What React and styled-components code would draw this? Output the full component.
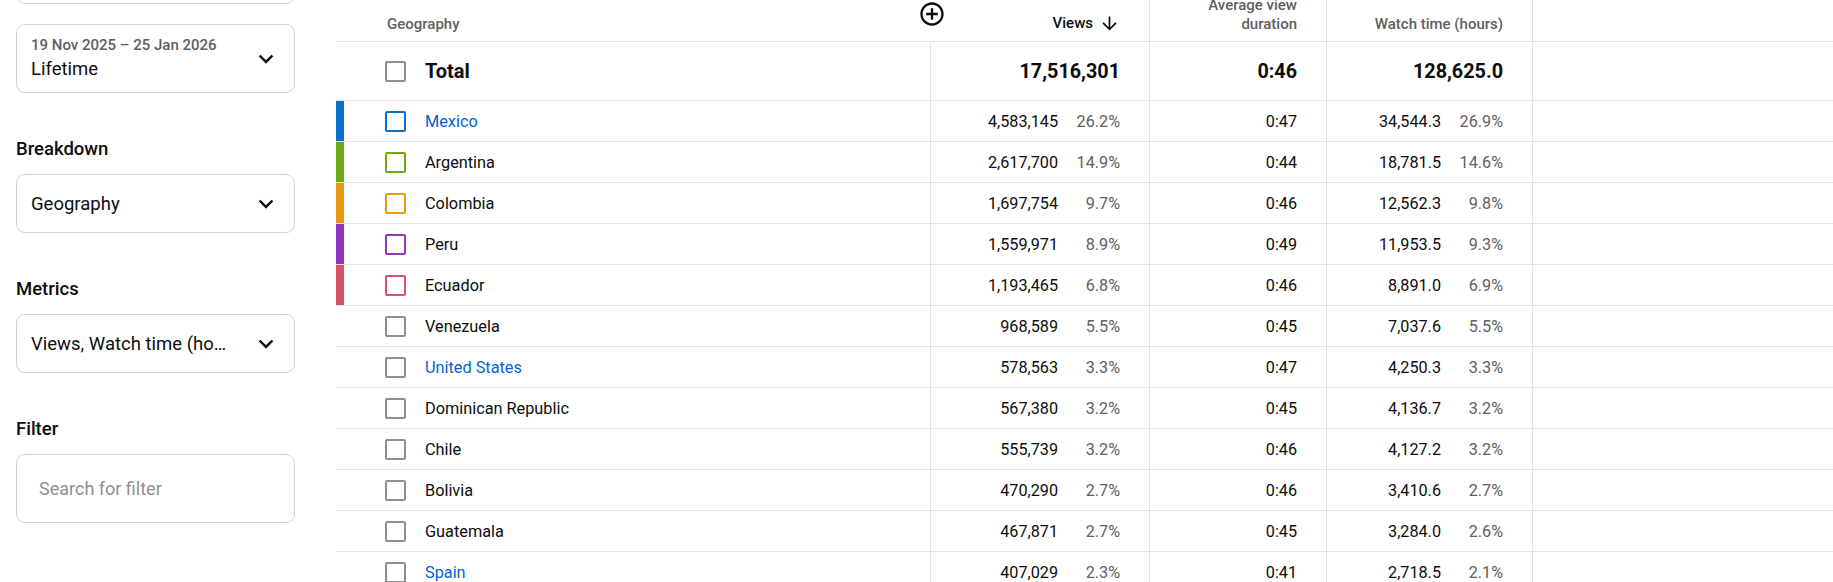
import styled, { createGlobalStyle } from "styled-components";

const GlobalStyle = createGlobalStyle`
  html, body {
    margin: 0;
    padding: 0;
    overflow: hidden;
    background: #ffffff;
  }
  body {
    font-family: Roboto, "Noto Sans", Arial, sans-serif;
    color: #0d0d0d;
  }
`;

const Page = styled.div`
  display: flex;
  align-items: flex-start;
  width: 1833px;
`;

const Sidebar = styled.aside`
  width: 279px;
  margin-left: 16px;
  flex-shrink: 0;
  display: flex;
  flex-direction: column;
`;

const Select = styled.div`
  box-sizing: border-box;
  height: ${(p) => p.$h || 59}px;
  border: 1px solid #d3d3d3;
  border-radius: 9px;
  display: flex;
  align-items: center;
  justify-content: space-between;
  padding: 0 14px 0 14px;
  margin-top: ${(p) => p.$mt || 0}px;
`;

const SelectText = styled.div`
  display: flex;
  flex-direction: column;
  font-size: 18.5px;
  line-height: 24px;
  color: #0d0d0d;
  white-space: nowrap;
`;

const DateLine = styled.span`
  font-size: 15px;
  line-height: 18px;
  font-weight: 500;
  color: #606060;
  margin-bottom: 3px;
`;

const Section = styled.div`
  margin-top: 44px;
  display: flex;
  flex-direction: column;
`;

const Label = styled.div`
  font-size: 18.5px;
  line-height: 24px;
  font-weight: 500;
  color: #0d0d0d;
  margin-bottom: 13px;
`;

const SearchBox = styled.div`
  box-sizing: border-box;
  height: 69px;
  border: 1px solid #d3d3d3;
  border-radius: 9px;
  display: flex;
  align-items: center;
  padding-left: 22px;
  font-size: 18px;
  color: #909090;
`;

const Table = styled.div`
  flex: 1;
  margin-left: 41px;
  display: flex;
  flex-direction: column;
`;

const Row = styled.div`
  display: grid;
  grid-template-columns: 595px 219px 177px 206px 1fr;
  height: ${(p) => p.$h}px;
  box-sizing: border-box;
  border-bottom: 1px solid #e3e3e3;
  position: relative;
`;

const HeadCell = styled.div`
  box-sizing: border-box;
  display: flex;
  align-items: flex-end;
  justify-content: ${(p) => (p.$left ? "flex-start" : "flex-end")};
  padding: ${(p) => (p.$left ? "0 0 7px 51px" : "0 29px 7px 0")};
  border-right: ${(p) => (p.$noLine ? "none" : "1px solid #e3e3e3")};
  font-size: 15px;
  line-height: 19px;
  font-weight: 500;
  color: ${(p) => (p.$active ? "#0d0d0d" : "#606060")};
  text-align: right;
  position: relative;
  min-height: 0;
`;

const HeadLabel = styled.div`
  display: flex;
  align-items: center;
  gap: 6px;
`;

const AddColumn = styled.div`
  position: absolute;
  left: -13px;
  top: 0;
  width: 28px;
  height: 28px;
  background: #fff;
`;

const NameCell = styled.div`
  display: flex;
  align-items: center;
  border-right: 1px solid #e3e3e3;
  position: relative;
  padding-left: 49px;
`;

const Bar = styled.div`
  position: absolute;
  left: 0;
  top: 0;
  bottom: 0;
  width: 8px;
  background: ${(p) => p.$color};
`;

const Check = styled.div`
  box-sizing: border-box;
  width: 21px;
  height: 21px;
  border: 2px solid ${(p) => p.$color || "#8f8f8f"};
  border-radius: 2px;
  margin-right: 19px;
  flex-shrink: 0;
`;

const Name = styled.span`
  font-size: ${(p) => (p.$total ? "20px" : "16.3px")};
  font-weight: ${(p) => (p.$total ? 700 : 400)};
  color: ${(p) => (p.$link ? "#065fd4" : "#0d0d0d")};
`;

const ValueCell = styled.div`
  display: flex;
  align-items: center;
  justify-content: flex-end;
  padding-right: 29px;
  border-right: ${(p) => (p.$last ? "none" : "1px solid #e3e3e3")};
  font-size: ${(p) => (p.$total ? "19.8px" : "16.2px")};
  font-weight: ${(p) => (p.$total ? 700 : 400)};
  color: #0d0d0d;
`;

const Pct = styled.span`
  width: 62px;
  text-align: right;
  color: #606060;
`;

const Chevron = () => (
  <svg width="28" height="28" viewBox="0 0 24 24">
    <polyline points="6.5,9 12,14.5 17.5,9" fill="none" stroke="#0d0d0d" strokeWidth="2.1" />
  </svg>
);

const ArrowDown = () => (
  <svg width="21" height="21" viewBox="0 0 24 24">
    <path d="M20 12l-1.41-1.41L13 16.17V4h-2v12.17l-5.58-5.59L4 12l8 8 8-8z" fill="#0d0d0d" />
  </svg>
);

const AddCircle = () => (
  <svg width="28" height="28" viewBox="0 0 24 24">
    <path
      d="M13 7h-2v4H7v2h4v4h2v-4h4v-2h-4V7zm-1-5C6.48 2 2 6.48 2 12s4.48 10 10 10 10-4.48 10-10S17.52 2 12 2zm0 18c-4.41 0-8-3.59-8-8s3.59-8 8-8 8 3.59 8 8-3.59 8-8 8z"
      fill="#0d0d0d"
    />
  </svg>
);

const rows = [
  { name: "Mexico", v: "4,583,145", vp: "26.2%", d: "0:47", w: "34,544.3", wp: "26.9%", color: "#0b6fd1", link: true },
  { name: "Argentina", v: "2,617,700", vp: "14.9%", d: "0:44", w: "18,781.5", wp: "14.6%", color: "#6cab14" },
  { name: "Colombia", v: "1,697,754", vp: "9.7%", d: "0:46", w: "12,562.3", wp: "9.8%", color: "#e8990f" },
  { name: "Peru", v: "1,559,971", vp: "8.9%", d: "0:49", w: "11,953.5", wp: "9.3%", color: "#9234c2" },
  { name: "Ecuador", v: "1,193,465", vp: "6.8%", d: "0:46", w: "8,891.0", wp: "6.9%", color: "#d6526c" },
  { name: "Venezuela", v: "968,589", vp: "5.5%", d: "0:45", w: "7,037.6", wp: "5.5%" },
  { name: "United States", v: "578,563", vp: "3.3%", d: "0:47", w: "4,250.3", wp: "3.3%", link: true },
  { name: "Dominican Republic", v: "567,380", vp: "3.2%", d: "0:45", w: "4,136.7", wp: "3.2%" },
  { name: "Chile", v: "555,739", vp: "3.2%", d: "0:46", w: "4,127.2", wp: "3.2%" },
  { name: "Bolivia", v: "470,290", vp: "2.7%", d: "0:46", w: "3,410.6", wp: "2.7%" },
  { name: "Guatemala", v: "467,871", vp: "2.7%", d: "0:45", w: "3,284.0", wp: "2.6%" },
  { name: "Spain", v: "407,029", vp: "2.3%", d: "0:41", w: "2,718.5", wp: "2.1%", link: true },
];

export default function App() {
  return (
    <>
      <GlobalStyle />
      <Page>
        <Sidebar>
          <Select $mt={-55} />
          <Select $h={69} $mt={20}>
            <SelectText>
              <DateLine>19 Nov 2025 – 25 Jan 2026</DateLine>
              Lifetime
            </SelectText>
            <Chevron />
          </Select>
          <Section>
            <Label>Breakdown</Label>
            <Select>
              <SelectText>Geography</SelectText>
              <Chevron />
            </Select>
          </Section>
          <Section>
            <Label>Metrics</Label>
            <Select>
              <SelectText>Views, Watch time (ho…</SelectText>
              <Chevron />
            </Select>
          </Section>
          <Section>
            <Label>Filter</Label>
            <SearchBox>Search for filter</SearchBox>
          </Section>
        </Sidebar>

        <Table>
          <Row $h={42}>
            <HeadCell $left $noLine>Geography</HeadCell>
            <HeadCell $active>
              <AddColumn>
                <AddCircle />
              </AddColumn>
              <HeadLabel>
                Views
                <ArrowDown />
              </HeadLabel>
            </HeadCell>
            <HeadCell>
              Average view
              <br />
              duration
            </HeadCell>
            <HeadCell>Watch time (hours)</HeadCell>
            <HeadCell $noLine />
          </Row>
          <Row $h={59}>
            <NameCell>
              <Check />
              <Name $total>Total</Name>
            </NameCell>
            <ValueCell $total>17,516,301</ValueCell>
            <ValueCell $total>0:46</ValueCell>
            <ValueCell $total>128,625.0</ValueCell>
            <ValueCell $last />
          </Row>
          {rows.map((r) => (
            <Row $h={41} key={r.name}>
              <NameCell>
                {r.color && <Bar $color={r.color} />}
                <Check $color={r.color} />
                <Name $link={r.link}>{r.name}</Name>
              </NameCell>
              <ValueCell>
                {r.v}
                <Pct>{r.vp}</Pct>
              </ValueCell>
              <ValueCell>{r.d}</ValueCell>
              <ValueCell>
                {r.w}
                <Pct>{r.wp}</Pct>
              </ValueCell>
              <ValueCell $last />
            </Row>
          ))}
        </Table>
      </Page>
    </>
  );
}
